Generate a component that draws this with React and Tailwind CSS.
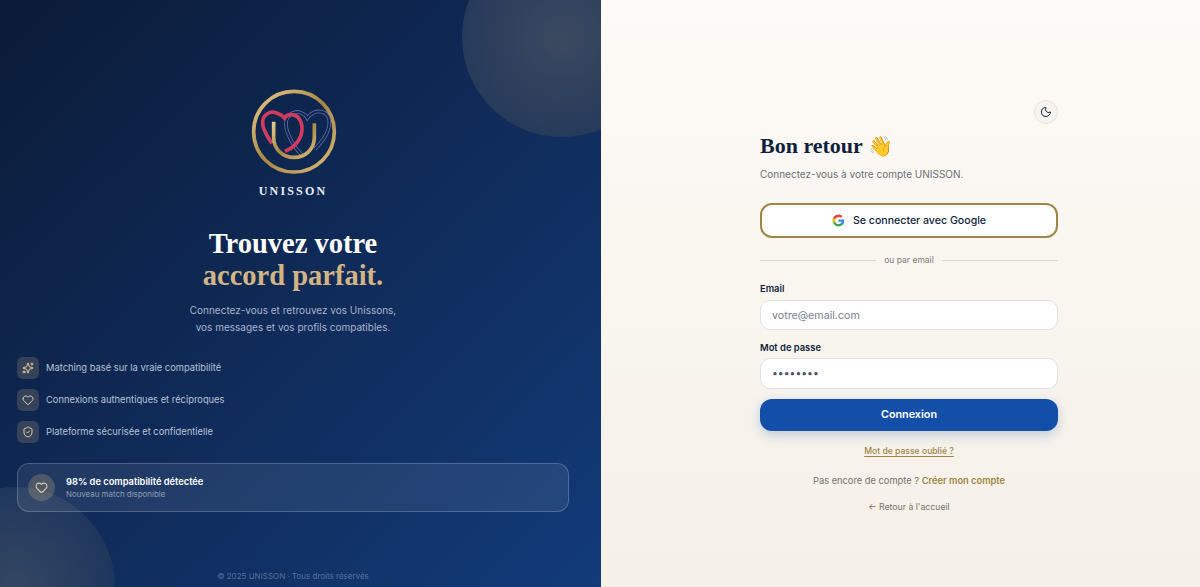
import React from "react";
import { Heart, Moon, ShieldCheck, Sparkles } from "lucide-react";

const inter = { fontFamily: "Inter, sans-serif" };

const Logo = () => (
  <svg width="130" height="125" viewBox="0 0 390 375" fill="none">
    <defs>
      <linearGradient id="gold" x1="0" y1="0" x2="1" y2="1">
        <stop offset="0" stopColor="#e6cb8c" />
        <stop offset="0.5" stopColor="#a98644" />
        <stop offset="1" stopColor="#d9bb78" />
      </linearGradient>
    </defs>
    <circle cx="192" cy="155" r="121" stroke="url(#gold)" strokeWidth="11" />
    {/* navy heart */}
    <path d="M215 225C195 205 170 165 168 135C166 106 192 90 212 98C222 102 230 110 232 114C240 102 258 90 277 96C296 102 302 122 295 147C288 172 270 192 255 207" stroke="#5a6ca6" strokeWidth="11" />
    <path d="M215 225C195 205 170 165 168 135C166 106 192 90 212 98C222 102 230 110 232 114C240 102 258 90 277 96C296 102 302 122 295 147C288 172 270 192 255 207" stroke="#10244e" strokeWidth="6" />
    {/* red heart */}
    <path d="M126 190C108 165 96 145 98 124C100 103 120 93 138 98C150 102 160 110 163 114C170 104 182 102 194 106C210 112 218 132 216 150C214 176 196 202 165 214" stroke="#d23a5e" strokeWidth="11" />
    {/* U */}
    <path d="M131 125V172C131 208 158 232 192 232C226 232 253 208 253 172V130" stroke="url(#gold)" strokeWidth="11" />
  </svg>
);

const Feature = ({ icon: Icon, children }) => (
  <div className="flex items-center gap-[7px]">
    <div className="flex h-[22px] w-[22px] items-center justify-center rounded-md bg-[#d4b483]/20">
      <Icon size={12} className="text-[#e3cfa8]" />
    </div>
    <span className="text-[9.35px] text-[#b9c3d3]">{children}</span>
  </div>
);

const GoogleIcon = () => (
  <svg width="13" height="13" viewBox="0 0 24 24">
    <path fill="#4285F4" d="M22.56 12.25c0-.78-.07-1.53-.2-2.25H12v4.26h5.92c-.26 1.37-1.04 2.53-2.21 3.31v2.77h3.57c2.08-1.92 3.28-4.74 3.28-8.09z" />
    <path fill="#34A853" d="M12 23c2.97 0 5.46-.98 7.28-2.66l-3.57-2.77c-.98.66-2.23 1.06-3.71 1.06-2.86 0-5.29-1.93-6.16-4.53H2.18v2.84C3.99 20.53 7.7 23 12 23z" />
    <path fill="#FBBC05" d="M5.84 14.09c-.22-.66-.35-1.36-.35-2.09s.13-1.43.35-2.09V7.07H2.18C1.43 8.55 1 10.22 1 12s.43 3.45 1.18 4.93l3.66-2.84z" />
    <path fill="#EA4335" d="M12 5.38c1.62 0 3.06.56 4.21 1.64l3.15-3.15C17.45 2.09 14.97 1 12 1 7.7 1 3.99 3.47 2.18 7.07l3.66 2.84c.87-2.6 3.3-4.53 6.16-4.53z" />
  </svg>
);

const App = () => {
  return (
    <div className="flex h-[587px] w-full overflow-hidden" style={inter}>
      <section className="relative flex w-[601px] shrink-0 flex-col overflow-hidden bg-gradient-to-br from-[#0b1b38] to-[#123b7a] pl-[17px] pr-[32px] pt-[90px]">
        <div className="absolute -right-[61px] -top-[63px] h-[200px] w-[200px] rounded-full bg-radial from-[#3c4960] to-[#1d3458]" />
        <div className="absolute -bottom-[100px] -left-[85px] h-[200px] w-[200px] rounded-full bg-radial from-[#344763] to-[#16305a]" />

        <div className="relative flex flex-col items-center">
          <div className="-mt-[10px] ml-[3px] h-[102px] w-[130px]">
            <Logo />
          </div>
          <p className="font-['Liberation_Serif',serif] text-[12px] font-bold tracking-[0.18em] text-[#e8ecf3]">UNISSON</p>
          <h1 className="mt-[28px] text-center font-['Liberation_Serif',serif] text-[28.5px] font-bold leading-[32px] text-white">
            Trouvez votre
            <br />
            <span className="text-[#d4b483]">accord parfait.</span>
          </h1>
          <p className="mt-[10px] text-center text-[10px] leading-[17px] text-[#a9b5c8]">
            Connectez-vous et retrouvez vos Unissons,
            <br />
            vos messages et vos profils compatibles.
          </p>
        </div>

        <div className="relative mt-[21px] flex flex-col gap-[10px]">
          <Feature icon={Sparkles}>Matching basé sur la vraie compatibilité</Feature>
          <Feature icon={Heart}>Connexions authentiques et réciproques</Feature>
          <Feature icon={ShieldCheck}>Plateforme sécurisée et confidentielle</Feature>
        </div>

        <div className="relative mt-[20px] flex h-[49px] items-center gap-[11px] rounded-xl border border-white/20 bg-white/[0.08] px-[10px]">
          <div className="flex h-[27px] w-[27px] items-center justify-center rounded-full bg-[#d4b483]/25">
            <Heart size={13} className="text-[#e3cfa8]" />
          </div>
          <div>
            <p className="text-[9.3px] font-semibold leading-[13px] text-white">98% de compatibilité détectée</p>
            <p className="text-[7.9px] leading-[12px] text-[#8f9cb3]">Nouveau match disponible</p>
          </div>
        </div>

        <p className="absolute bottom-[5px] left-[17px] right-[32px] text-center text-[8px] text-white/30">© 2025 UNISSON · Tous droits réservés</p>
      </section>

      <section className="flex flex-1 flex-col items-center bg-gradient-to-b from-[#fdfbf7] to-[#f5f0e8] pl-[17px] pt-[100px]">
        <div className="w-[298px]">
          <div className="flex justify-end">
            <button className="flex h-6 w-6 items-center justify-center rounded-full border border-[#e8e2d8] bg-[#f7f4ee]">
              <Moon size={12} className="text-[#0f1f3d]" />
            </button>
          </div>
          <h2 className="mt-[8px] font-['Liberation_Serif',serif] text-[22px] font-bold leading-[28px] text-[#0f1f3d]">
            Bon retour <span className="text-[20px]">👋</span>
          </h2>
          <p className="mt-[7px] text-[10px] leading-[14px] text-[#6b6f76]">Connectez-vous à votre compte UNISSON.</p>

          <button className="mt-[22px] flex h-[35px] w-full items-center justify-center gap-[8px] rounded-xl border-2 border-[#a08545] bg-white text-[10.6px] font-medium text-[#0f1f3d]">
            <GoogleIcon />
            Se connecter avec Google
          </button>

          <div className="mt-[15px] flex items-center gap-2">
            <div className="h-px flex-1 bg-[#ddd6c8]" />
            <span className="text-[8.5px] leading-[14px] text-[#7a7a7a]">ou par email</span>
            <div className="h-px flex-1 bg-[#ddd6c8]" />
          </div>

          <label className="mt-[15px] block text-[9.4px] font-semibold leading-[14px] text-[#0f1f3d]">Email</label>
          <input
            readOnly
            placeholder="votre@email.com"
            className="mt-[4px] block h-[30px] w-full rounded-[10px] border border-[#dfe1e6] bg-white px-[11px] text-[10.7px] outline-none placeholder:text-[#7b8190]"
          />
          <label className="mt-[11px] block text-[9.4px] font-semibold leading-[14px] text-[#0f1f3d]">Mot de passe</label>
          <input
            readOnly
            type="password"
            value="password"
            className="mt-[3px] block h-[31px] w-full rounded-[10px] border border-[#dfe1e6] bg-white px-[11px] text-[10.4px] text-[#4b5563] outline-none"
          />

          <button className="mt-[10px] h-[32px] w-full rounded-xl bg-[#134fa8] pt-[1px] text-[10.8px] font-semibold text-white shadow-[0_4px_12px_rgba(19,79,168,0.25)]">
            Connexion
          </button>

          <div className="mt-[3px] text-center leading-[28px]">
            <a href="#" className="text-[8.6px] font-medium text-[#a08545] underline underline-offset-2">Mot de passe oublié ?</a>
          </div>
          <p className="mt-[9px] text-center text-[9.3px] leading-[14px] text-[#77716a]">
            Pas encore de compte ? <a href="#" className="font-semibold text-[#a08545]">Créer mon compte</a>
          </p>
          <p className="mt-[12px] text-center text-[8.7px] leading-[14px] text-[#77716a]">← Retour à l'accueil</p>
        </div>
      </section>
    </div>
  );
};

export default App;
